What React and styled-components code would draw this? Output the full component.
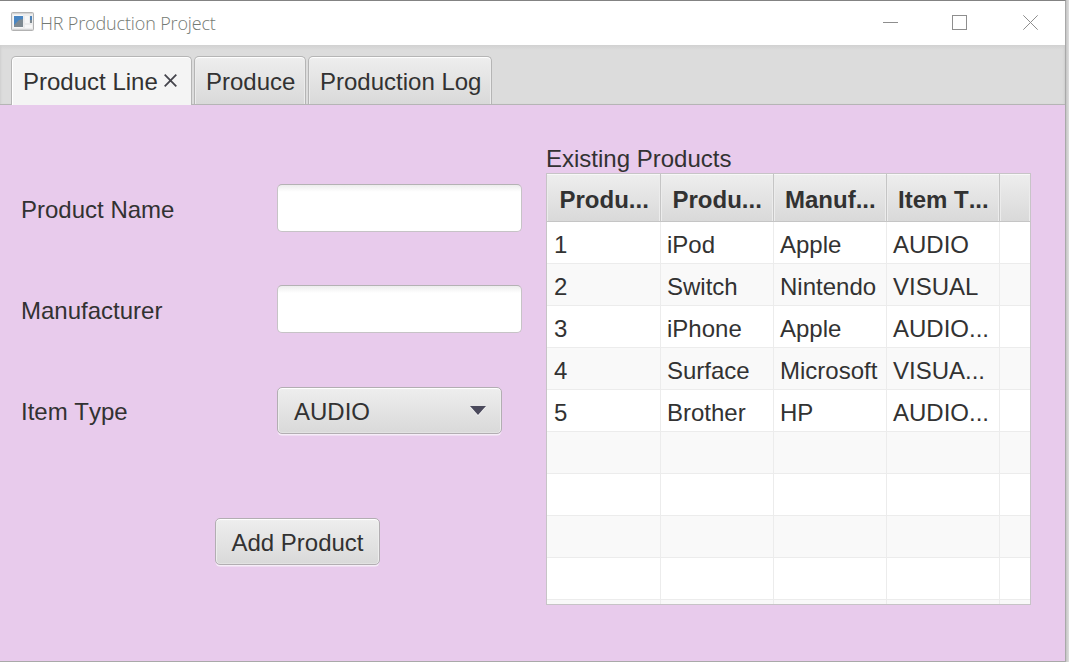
import React from "react";
import styled, { createGlobalStyle, css } from "styled-components";

const GlobalStyle = createGlobalStyle`
  * { box-sizing: border-box; }
  html, body { margin: 0; padding: 0; overflow: hidden; }
  body { background: #dadada; }
`;

const Desktop = styled.div`
  width: 1069px;
  height: 662px;
  background: linear-gradient(90deg, #c4c4c4, #dfdfdf) right / 3px 100% no-repeat;
`;

const Window = styled.div`
  display: flex;
  flex-direction: column;
  width: 1066px;
  height: 662px;
  border: solid #a9a9a9;
  border-width: 1px 1px 1px 0;
  border-top-color: #838383;
  font: 24px/28px "Liberation Sans", Arial, sans-serif;
  font-kerning: none;
  color: #323232;
`;

const TitleBar = styled.header`
  display: flex;
  align-items: center;
  height: 44px;
  padding-left: 11px;
  background: #fff;
`;

const Title = styled.h1`
  flex: 1;
  margin: 0 0 0 6px;
  font: 300 18px/24px "Open Sans", "Noto Sans", sans-serif;
  letter-spacing: -0.15px;
  color: #747a74;
`;

const WindowControls = styled.div`
  display: flex;
  gap: 53px;
  padding-right: 26px;
  svg { display: block; }
  svg:last-child { margin-left: 2px; }
`;

const TabHeader = styled.nav`
  display: flex;
  align-items: flex-end;
  gap: 2px;
  height: 60px;
  padding-left: 11px;
  border-bottom: 1px solid #b5b5b5;
  background: linear-gradient(#d1d1d1, #dcdcdc 5px);
  box-shadow: inset 2px 0 2px -1px #cfcfcf, inset -2px 0 2px -1px #cfcfcf;
`;

const Tab = styled.div`
  display: flex;
  align-items: center;
  width: ${(p) => p.$width}px;
  height: 48px;
  padding: 3px 0 0 11px;
  border: 1px solid #b5b5b5;
  border-bottom: 0;
  border-radius: 5px 5px 0 0;
  background: linear-gradient(#eeeeee, #d9d9d9);
  box-shadow: inset 0 2px 1px -1px #fff, inset 1px 0 #ececec, inset -1px 0 #ececec;
  white-space: nowrap;
  ${(p) => p.$selected && css`
    height: 49px;
    margin-bottom: -1px;
    padding-bottom: 1px;
    background: #f4f4f4;
    box-shadow: inset 0 1px #fff, inset 1px 0 #fff;
  `}
  svg { margin: -3px 0 0 6px; }
`;

const Content = styled.main`
  display: flex;
  flex: 1;
  background: #e8cbec;
`;

const Form = styled.form`
  width: 546px;
  padding: 79px 0 0 21px;
`;

const Field = styled.div`
  display: grid;
  grid-template-columns: 256px 1fr;
  align-items: center;
  height: 48px;
  margin-bottom: 53px;
`;

const Label = styled.label`
  padding-top: 3px;
`;

const TextInput = styled.input`
  width: 245px;
  height: 48px;
  padding: 0 14px;
  border: 1px solid #c6c3c6;
  border-top-color: #b4b2b4;
  border-radius: 5px;
  outline: 0;
  font: inherit;
  background: linear-gradient(#ededed, #fff 7px);
`;

const raised = css`
  height: 47px;
  border: 1px solid #b2aeb2;
  border-radius: 5px;
  font: inherit;
  font-kerning: none;
  color: inherit;
  background: linear-gradient(#eeeeee, #d9d9d9);
  box-shadow: inset 0 2px 1px -1px #fff, inset 1px 0 #ededed, inset -1px 0 #ededed,
    inset 0 -1px #e2e2e2, 0 2px 0 -0.5px #f6edf8;
`;

const Combo = styled.button`
  ${raised}
  display: flex;
  align-items: center;
  justify-content: space-between;
  width: 225px;
  padding: 4px 15px 0 16px;
  svg { margin-top: -2px; }
`;

const AddButton = styled.button`
  ${raised}
  display: block;
  width: 165px;
  margin: 84px 0 0 194px;
  padding: 2px 0 0;
`;

const Products = styled.section`
  width: 485px;
  padding-top: 40px;
`;

const Caption = styled.h2`
  height: 28px;
  margin: 0;
  font: inherit;
`;

const Table = styled.div`
  height: 432px;
  overflow: hidden;
  border: 1px solid #c7c4c7;
  background: #fff;
`;

const columns = "114px 113px 113px 113px 1fr";

const HeadRow = styled.div`
  display: grid;
  grid-template-columns: ${columns};
  height: 48px;
  border-bottom: 1px solid #c5c5c5;
  font-weight: bold;
`;

const HeadCell = styled.div`
  padding: 12px 0 0 11px;
  border-right: 1px solid #c5c5c5;
  background: linear-gradient(#eeeeee, #d9d9d9);
  box-shadow: inset 0 1px #f8f8f8, inset 1px 0 #ececec, inset -1px 0 #ececec;
  white-space: nowrap;
  &:first-child { padding-left: 12.5px; }
  &:nth-child(2) { padding-left: 11.5px; }
  &:last-child { border-right: 0; }
`;

const Row = styled.div`
  display: grid;
  grid-template-columns: ${columns};
  height: 42px;
  border-bottom: 1px solid #ececec;
  background: ${(p) => (p.$alternate ? "#f9f9f9" : "#fff")};
`;

const Cell = styled.div`
  padding: 9px 0 0 6px;
  border-right: 1px solid #ececec;
  white-space: nowrap;
  &:first-child { padding-left: 7px; }
  &:last-child { border-right: 0; }
`;

const IconSlot = styled.span`
  display: block;
  height: 22px;
  svg { display: block; }
`;

const AppIcon = () => (
  <IconSlot>
    <svg width="23" height="19" viewBox="0 0 23 19">
      <rect x=".5" y=".5" width="22" height="18" rx="1" fill="#ececec" stroke="#b2b2b2" />
      <path d="M1 1.5h21M1 17.5h21" stroke="#d5d5d5" />
      <rect x="2" y="3" width="10" height="13" fill="#f8f8f8" />
      <rect x="3" y="4" width="9" height="11" fill="#7f8a91" />
      <path d="M3 4h9v3L8 8 3 13Z" fill="#4a86c2" />
      <rect x="14" y="4" width="4" height="7" fill="#f7f7f7" />
      <rect x="19" y="4" width="2" height="7" fill="#7f8a91" />
      <rect x="19" y="4" width="2" height="4" fill="#4d83b9" />
      <rect x="14" y="13" width="7" height="3" fill="#f7f7f7" />
    </svg>
  </IconSlot>
);

const rows = [
  ["1", "iPod", "Apple", "AUDIO"],
  ["2", "Switch", "Nintendo", "VISUAL"],
  ["3", "iPhone", "Apple", "AUDIO..."],
  ["4", "Surface", "Microsoft", "VISUA..."],
  ["5", "Brother", "HP", "AUDIO..."],
  [], [], [], [], [],
];

export default function App() {
  return (
    <Desktop>
      <GlobalStyle />
      <Window>
        <TitleBar>
          <AppIcon />
          <Title>HR Production Project</Title>
          <WindowControls>
            <svg width="16" height="16"><path d="M0 7.5h15" stroke="#8e8e8e" /></svg>
            <svg width="16" height="16"><rect x=".5" y=".5" width="14" height="14" fill="none" stroke="#8e8e8e" /></svg>
            <svg width="16" height="16"><path d="M.3.3l14.4 14.4M14.7.3L.3 14.7" stroke="#8e8e8e" /></svg>
          </WindowControls>
        </TitleBar>
        <TabHeader>
          <Tab $width={181} $selected>
            Product Line
            <svg width="13" height="13"><path d="M.7.7l11.6 11.6M12.3.7L.7 12.3" stroke="#44444c" strokeWidth="1.8" /></svg>
          </Tab>
          <Tab $width={112}>Produce</Tab>
          <Tab $width={184}>Production Log</Tab>
        </TabHeader>
        <Content>
          <Form onSubmit={(e) => e.preventDefault()}>
            <Field>
              <Label htmlFor="name">Product Name</Label>
              <TextInput id="name" />
            </Field>
            <Field>
              <Label htmlFor="maker">Manufacturer</Label>
              <TextInput id="maker" />
            </Field>
            <Field>
              <Label htmlFor="type">Item Type</Label>
              <Combo id="type" type="button">
                AUDIO
                <svg width="16" height="10">
                  <path d="M0 1h16L8 10Z" fill="#fafafa" />
                  <path d="M0 0h16L8 9Z" fill="#4b4a5c" />
                </svg>
              </Combo>
            </Field>
            <AddButton type="submit">Add Product</AddButton>
          </Form>
          <Products>
            <Caption>Existing Products</Caption>
            <Table>
              <HeadRow>
                {["Produ...", "Produ...", "Manuf...", "Item T...", ""].map((h, i) => (
                  <HeadCell key={i}>{h}</HeadCell>
                ))}
              </HeadRow>
              {rows.map((row, r) => (
                <Row key={r} $alternate={r % 2 === 1}>
                  {[0, 1, 2, 3, 4].map((c) => <Cell key={c}>{row[c]}</Cell>)}
                </Row>
              ))}
            </Table>
          </Products>
        </Content>
      </Window>
    </Desktop>
  );
}
